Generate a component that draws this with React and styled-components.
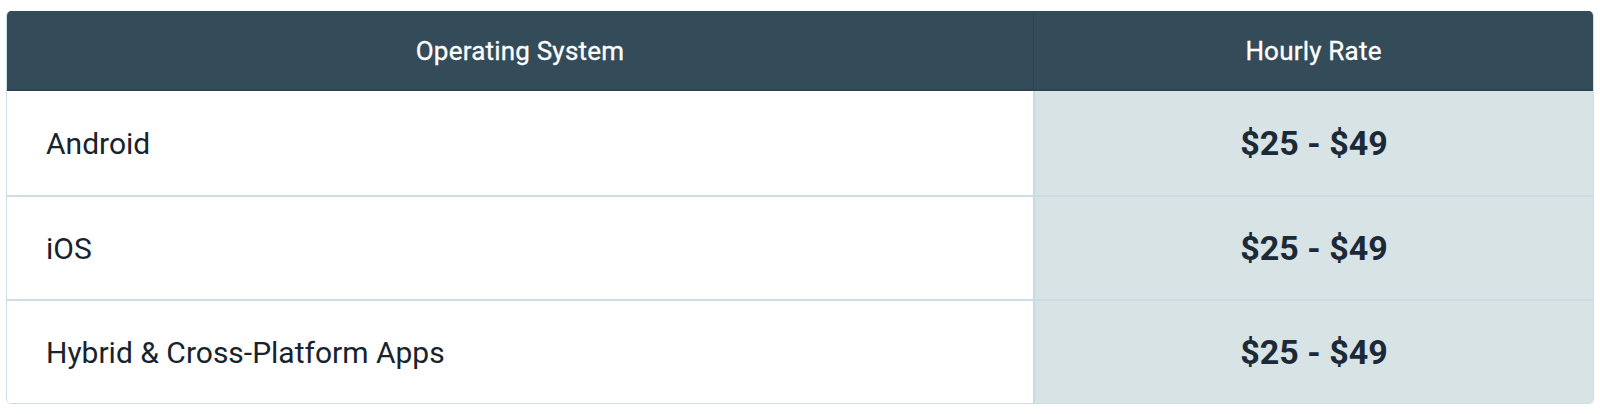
import React from 'react';
import styled, { createGlobalStyle } from 'styled-components';

const GlobalStyle = createGlobalStyle`
  body {
    margin: 0;
    background: #ffffff;
    font-family: Roboto, 'Liberation Sans', sans-serif;
  }
`;

const Wrapper = styled.div`
  padding: 11px 8px 0 6px;
`;

const Table = styled.table`
  width: 1586px;
  border-collapse: separate;
  border-spacing: 0;
  border: 1px solid #cddde6;
  border-top: none;
  border-radius: 5px;
  overflow: hidden;
  table-layout: fixed;
`;

const HeadCell = styled.th`
  background: #344c5a;
  color: #ffffff;
  font-size: 26px;
  font-weight: 400;
  letter-spacing: 0.2px;
  -webkit-text-stroke: 0.3px #ffffff;
  height: 80px;
  padding: 0;
  text-align: center;
  border-left: ${(p) => (p.$divider ? '1px solid #2e4451' : 'none')};
  box-shadow: inset 0 -2px 0 #2c4350;
`;

const Cell = styled.td`
  height: ${(p) => (p.$first ? '104px' : '102px')};
  padding: 0 0 0 39px;
  font-size: 30px;
  color: #17232d;
  background: #ffffff;
  border-top: ${(p) => (p.$first ? 'none' : '2px solid #cddde6')};
`;

const RateCell = styled.td`
  padding: 0;
  text-align: center;
  font-size: 34px;
  font-weight: 700;
  color: #1b2a36;
  background: #d8e3e6;
  border-left: 2px solid #c9dae3;
  border-top: ${(p) => (p.$first ? 'none' : '2px solid #cddde6')};
`;

const rows = [
  { os: 'Android', rate: '$25 - $49' },
  { os: 'iOS', rate: '$25 - $49' },
  { os: 'Hybrid & Cross-Platform Apps', rate: '$25 - $49' },
];

export default function App() {
  return (
    <Wrapper>
      <GlobalStyle />
      <Table>
        <colgroup>
          <col style={{ width: 1026 }} />
          <col style={{ width: 560 }} />
        </colgroup>
        <thead>
          <tr>
            <HeadCell>Operating System</HeadCell>
            <HeadCell $divider>Hourly Rate</HeadCell>
          </tr>
        </thead>
        <tbody>
          {rows.map((r, i) => (
            <tr key={r.os}>
              <Cell $first={i === 0}>{r.os}</Cell>
              <RateCell $first={i === 0}>{r.rate}</RateCell>
            </tr>
          ))}
        </tbody>
      </Table>
    </Wrapper>
  );
}
